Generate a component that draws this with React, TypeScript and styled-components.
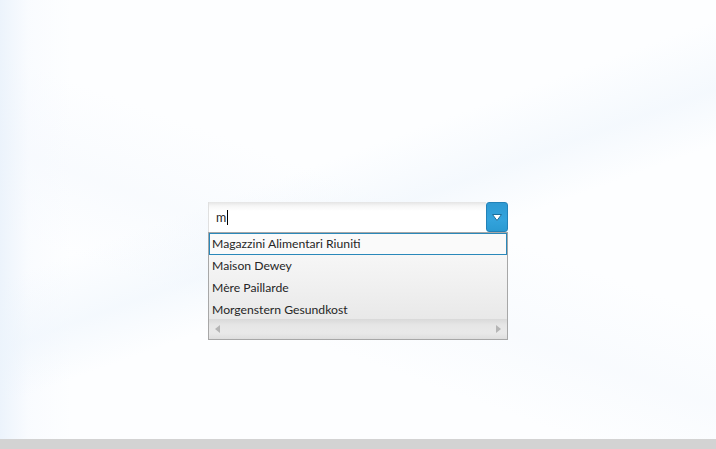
import React from "react";
import styled, { createGlobalStyle } from "styled-components";

const GlobalStyle = createGlobalStyle`
  html, body {
    margin: 0;
    padding: 0;
    height: 100%;
  }
  body {
    font-family: Lato, "Open Sans", sans-serif;
  }
`;

const Page = styled.div`
  width: 716px;
  height: 449px;
  display: flex;
  flex-direction: column;
  overflow: hidden;
`;

const Stage = styled.div`
  flex: 1;
  display: flex;
  justify-content: center;
  align-items: flex-start;
  padding-top: 202px;
  background:
    linear-gradient(160deg, rgba(255, 255, 255, 0) 40%, rgba(236, 244, 252, 0.5) 50%, rgba(255, 255, 255, 0) 58%),
    linear-gradient(90deg, rgba(232, 241, 251, 0.8) 0%, rgba(246, 249, 254, 0.5) 4%, rgba(255, 255, 255, 0) 10%),
    linear-gradient(200deg, rgba(255, 255, 255, 0) 45%, rgba(244, 248, 253, 0.5) 58%, rgba(255, 255, 255, 0) 70%),
    #fdfeff;
`;

const BottomBar = styled.div`
  height: 10px;
  background: #d3d3d3;
`;

const Combo = styled.div`
  width: 300px;
  display: flex;
  flex-direction: column;
`;

const InputRow = styled.div`
  display: flex;
  height: 30px;
`;

const Field = styled.div`
  flex: 1;
  display: flex;
  align-items: center;
  padding-left: 7px;
  background: linear-gradient(to bottom, #e4e4e4 0px, #f6f6f6 4px, #ffffff 9px, #ffffff 100%);
  border-left: 1px solid #e0e0e0;
  font-size: 12.5px;
  color: #1e1e1e;
`;

const Caret = styled.span`
  display: inline-block;
  width: 1px;
  height: 15px;
  margin-left: 1px;
  background: #000;
`;

const DropButton = styled.div`
  width: 22px;
  display: flex;
  align-items: center;
  justify-content: center;
  border: 1px solid #2382b8;
  border-radius: 3px;
  background: linear-gradient(to bottom, #2e9ad3 0%, #33a3dc 60%, #2a9ad2 100%);
  box-sizing: border-box;
`;

const List = styled.div`
  display: flex;
  flex-direction: column;
  height: 108px;
  border: 1px solid #a7a7a7;
  box-sizing: border-box;
  background: linear-gradient(to bottom, #fbfbfb 0%, #f0f0f0 50%, #e4e4e4 100%);
  overflow: hidden;
`;

const Items = styled.div`
  flex: 1;
  overflow: hidden;
`;

const Item = styled.div<{ $active?: boolean }>`
  height: 22px;
  box-sizing: border-box;
  display: flex;
  align-items: center;
  padding: 0 0 1px 2px;
  border: 1px solid ${(p) => (p.$active ? "#2a88ba" : "transparent")};
  background: ${(p) => (p.$active ? "#fafafa" : "transparent")};
  font-size: 12.2px;
  color: #262626;
  white-space: nowrap;
`;

const Scrollbar = styled.div`
  height: 20px;
  display: flex;
  align-items: center;
  justify-content: space-between;
  padding: 0 6px;
  background: linear-gradient(to bottom, #d9d9d9 0%, #e6e6e6 30%, #e9e9e9 70%, #dedede 100%);
`;

const Arrow = ({ dir }: { dir: "left" | "right" }) => (
  <svg width="5" height="8" viewBox="0 0 5 8">
    {dir === "left" ? (
      <path d="M5 0 L0 4 L5 8 Z" fill="#b5b5b5" />
    ) : (
      <path d="M0 0 L5 4 L0 8 Z" fill="#b5b5b5" />
    )}
  </svg>
);

const names = [
  "Magazzini Alimentari Riuniti",
  "Maison Dewey",
  "Mère Paillarde",
  "Morgenstern Gesundkost",
];

export default function App() {
  return (
    <Page>
      <GlobalStyle />
      <Stage>
        <Combo>
          <InputRow>
            <Field>
              m<Caret />
            </Field>
            <DropButton>
              <svg width="10" height="7" viewBox="0 0 10 7">
                <path d="M0.5 0.5 L9.5 0.5 L5 6.5 Z" fill="#ffffff" stroke="#1c6f9c" strokeWidth="1" strokeLinejoin="round" />
              </svg>
            </DropButton>
          </InputRow>
          <List>
            <Items>
              {names.map((n, i) => (
                <Item key={n} $active={i === 0}>
                  {n}
                </Item>
              ))}
            </Items>
            <Scrollbar>
              <Arrow dir="left" />
              <Arrow dir="right" />
            </Scrollbar>
          </List>
        </Combo>
      </Stage>
      <BottomBar />
    </Page>
  );
}
